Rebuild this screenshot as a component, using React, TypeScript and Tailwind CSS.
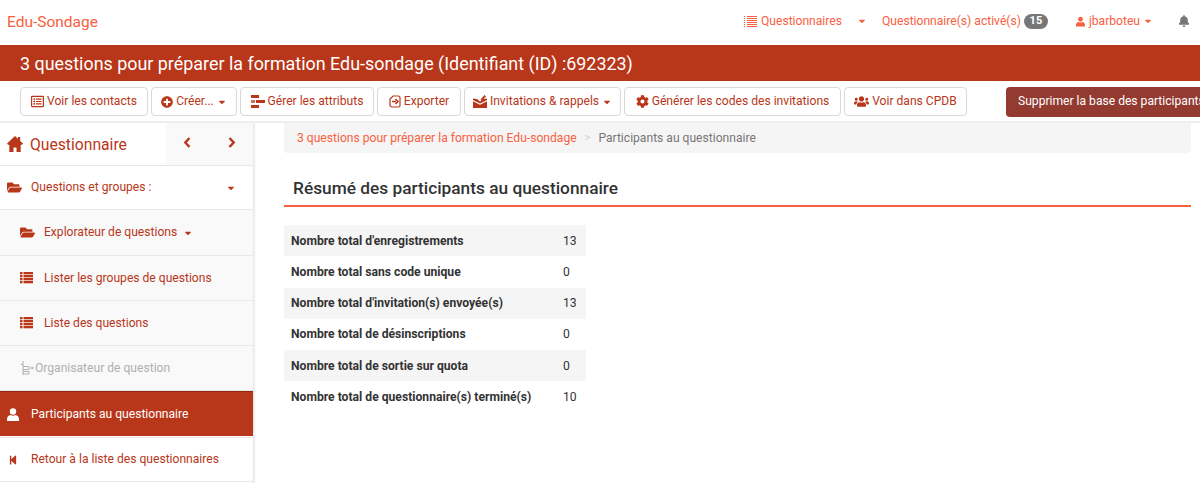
import { FaBell, FaCaretDown, FaCog, FaFolderOpen, FaPlusCircle, FaRegListAlt, FaStepBackward, FaUsers } from "react-icons/fa";

const stats = [
  ["Nombre total d'enregistrements", "13"],
  ["Nombre total sans code unique", "0"],
  ["Nombre total d'invitation(s) envoyée(s)", "13"],
  ["Nombre total de désinscriptions", "0"],
  ["Nombre total de sortie sur quota", "0"],
  ["Nombre total de questionnaire(s) terminé(s)", "10"],
];

// square bullets and thick bars, like the old font awesome list
const ListIcon = ({ className = "" }: { className?: string }) => (
  <svg className={className} width="13" height="12" viewBox="0 0 13 12" fill="currentColor">
    {[0, 3, 6, 9].map((y) => (
      <g key={y}>
        <rect x="0" y={y} width="2.500" height="2.300" />
        <rect x="3.500" y={y} width="9.500" height="2.300" />
      </g>
    ))}
  </svg>
);

const HomeIcon = () => (
  <svg width="16" height="16" viewBox="0 0 16 16" fill="currentColor">
    <path d="M8 0l3 2.800V1h2.200v3.900L16 7.600 15 8.700h-1.300V16H9.500v-4.500h-3V16H2.300V8.700H1L0 7.600z" />
  </svg>
);

const UserIcon = ({ className = "" }: { className?: string }) => (
  <svg className={className} viewBox="0 0 12 13" fill="currentColor">
    <circle cx="6" cy="3.500" r="3.200" />
    <path d="M3.500 7c1.500 1 3.500 1 5 0 2 .2 3.500 2 3.500 4.300V13H0v-1.700C0 9 1.500 7.200 3.500 7z" />
  </svg>
);

const Chevron = ({ right = false }: { right?: boolean }) => (
  <svg width="8" height="11" viewBox="0 0 8 11" fill="none" stroke="currentColor" strokeWidth="2.400">
    <path d={right ? "M1.500 1l4.200 4.500L1.500 10" : "M6.500 1L2.300 5.500 6.500 10"} />
  </svg>
);

const AttributesIcon = () => (
  <svg width="14" height="13" viewBox="0 0 14 13" fill="currentColor">
    <rect x="0" y="0" width="8" height="3" />
    <rect x="0" y="5" width="4" height="3" opacity="0.7" />
    <rect x="5" y="5" width="9" height="3" />
    <rect x="0" y="10" width="8" height="3" />
  </svg>
);

const ExportIcon = () => (
  <svg width="12" height="13" viewBox="0 0 12 13" fill="none" stroke="currentColor" strokeWidth="1.200">
    <path d="M4 1h5a2 2 0 0 1 2 2v7.500a1.500 1.500 0 0 1-1.500 1.500H3a2 2 0 0 1-2-2V4z" />
    <path d="M3 6.500h4M6.500 4l2.500 2.500L6.500 9" strokeWidth="1.500" />
  </svg>
);

const InvitationIcon = () => (
  <svg width="14" height="13" viewBox="0 0 14 13" fill="currentColor">
    <path d="M0 3.500l4 .5 3 2.500 3-2.500 4-.5v1.500L7 8.500 0 5z" />
    <path d="M0 6.300l7 3.500 7-3.500V13H0z" />
    <path d="M7.500 4.500L11.500 0 13 1.500 9 5.500z" />
  </svg>
);

const OrganizerIcon = () => (
  <svg width="13" height="14" viewBox="0 0 13 14" fill="none" stroke="currentColor" strokeWidth="1">
    <path d="M2 0v14M0 3.500h2M2 5.500h6v3H2M2 10.500h6V13H2M9 7h3M11 5.500L12.500 7 11 8.500" />
  </svg>
);

const NavListIcon = () => (
  <svg width="13" height="11" viewBox="0 0 13 11" fill="currentColor">
    {[0, 2, 4, 6, 8, 10].map((y) => (
      <g key={y}>
        <rect x="0" y={y} width="1.200" height="1" />
        <rect x="3" y={y} width="10" height="1" />
      </g>
    ))}
  </svg>
);

const Caret = ({ className = "" }: { className?: string }) => (
  <FaCaretDown className={`text-[10px] ${className}`} />
);

const ToolbarButton = ({ w, children }: { w: string; children: React.ReactNode }) => (
  <div
    className={`${w} h-[29px] shrink-0 flex items-center justify-center gap-[3px] rounded-[4px] border-[1.5px] border-[#d9d9d9] bg-white text-[12.1px] text-[#b83619]`}
  >
    {children}
  </div>
);

const SideRow = ({
  icon,
  children,
  className = "",
}: {
  icon: React.ReactNode;
  children: React.ReactNode;
  className?: string;
}) => (
  <div className={`flex items-center border-b border-[#e7e7e7] text-[12.1px] ${className}`}>
    {icon}
    {children}
  </div>
);

export default function App() {
  return (
    <div className="w-[1200px] h-[483px] overflow-hidden bg-white font-['Roboto',sans-serif]">
      {/* top nav */}
      <nav className="h-[45px] flex items-center pl-[7px] text-[#f9603f]">
        <span className="text-[15.500px] leading-none">Edu-Sondage</span>
        <div className="ml-auto flex items-center text-[12.1px] pb-[2px]">
          <NavListIcon />
          <span className="ml-[4px] w-[81px]">Questionnaires</span>
          <Caret className="ml-[15px]" />
          <span className="ml-[15px]">Questionnaire(s) activé(s)</span>
          <span className="ml-[3px] h-[15px] w-[24px] rounded-full bg-[#777] text-white text-[11px] font-bold flex items-center justify-center">
            15
          </span>
          <UserIcon className="w-[9px] h-[11px] ml-[28px]" />
          <span className="ml-[4px]">jbarboteu</span>
          <Caret className="ml-[3px]" />
          <FaBell className="text-[12px] text-[#777] ml-[25px] mr-[10px]" />
        </div>
      </nav>

      {/* title */}
      <div className="h-[36px] bg-[#b83619] pl-[20px] pt-px flex items-center text-white text-[17.900px] leading-none">
        3 questions pour préparer la formation Edu-sondage (Identifiant (ID) :692323)
      </div>

      {/* toolbar */}
      <div className="h-[42px] pl-[20px] pt-[1px] flex items-center gap-[3px] border-b-2 border-[#eee] overflow-hidden">
        <ToolbarButton w="w-[128px]">
          <FaRegListAlt className="text-[13px]" />
          Voir les contacts
        </ToolbarButton>
        <ToolbarButton w="w-[86px]">
          <FaPlusCircle className="text-[12px]" />
          Créer...
          <Caret />
        </ToolbarButton>
        <ToolbarButton w="w-[134px]">
          <AttributesIcon />
          Gérer les attributs
        </ToolbarButton>
        <ToolbarButton w="w-[84px]">
          <ExportIcon />
          Exporter
        </ToolbarButton>
        <ToolbarButton w="w-[157px]">
          <InvitationIcon />
          Invitations &amp; rappels
          <Caret />
        </ToolbarButton>
        <ToolbarButton w="w-[217px]">
          <FaCog className="text-[13px]" />
          Générer les codes des invitations
        </ToolbarButton>
        <ToolbarButton w="w-[123px]">
          <FaUsers className="text-[15px]" />
          Voir dans CPDB
        </ToolbarButton>
        <div className="ml-[36px] h-[30px] w-[200px] shrink-0 rounded-[4px] bg-[#933a31] text-white text-[12.1px] flex items-center pl-[12px] whitespace-nowrap">
          Supprimer la base des participants
        </div>
      </div>

      <div className="flex h-[360px]">
        {/* sidebar */}
        <aside className="w-[254px] shrink-0 border-r border-[#e7e7e7] shadow-[1px_0_2px_#eee] text-[#b83619]">
          <div className="h-[43px] flex border-b border-[#e7e7e7]">
            <div className="flex-1 flex items-center pl-[7px] text-[15.700px]">
              <HomeIcon />
              <span className="ml-[7px] pt-[2px]">Questionnaire</span>
            </div>
            <div className="w-[87px] bg-[#f9f9f9] flex items-center justify-between px-[17px] pb-[3px]">
              <Chevron />
              <Chevron right />
            </div>
          </div>
          <SideRow className="h-[44px] pl-[7px]" icon={<FaFolderOpen className="text-[15px] mr-[9px]" />}>
            Questions et groupes :
            <Caret className="ml-auto mr-[17px]" />
          </SideRow>
          <div className="bg-[#f9f9f9]">
            <SideRow className="h-[46px] pl-[20px]" icon={<FaFolderOpen className="text-[15px] mr-[9px]" />}>
              Explorateur de questions
              <Caret className="ml-[6px]" />
            </SideRow>
            <SideRow className="h-[45px] pl-[20px]" icon={<ListIcon className="mr-[11px]" />}>
              Lister les groupes de questions
            </SideRow>
            <SideRow className="h-[45px] pl-[20px]" icon={<ListIcon className="mr-[11px]" />}>
              Liste des questions
            </SideRow>
            <SideRow
              className="h-[45px] pl-[21px] text-[#b0b0b0]"
              icon={
                <span className="mr-[1px] text-[#b0b0b0]">
                  <OrganizerIcon />
                </span>
              }
            >
              Organisateur de question
            </SideRow>
          </div>
          <div className="h-[45px] pl-[7px] flex items-center bg-[#b83619] border-t border-[#98260c] text-white text-[12.1px]">
            <UserIcon className="w-[12px] h-[13px] mr-[12px]" />
            Participants au questionnaire
          </div>
          <SideRow className="h-[45px] mt-px pl-[8px] border-t" icon={<FaStepBackward className="text-[10px] mr-[13px]" />}>
            Retour à la liste des questionnaires
          </SideRow>
        </aside>

        {/* content */}
        <main className="w-[907px] ml-[30px] shrink-0">
          <div className="h-[30px] rounded-b-[4px] bg-[#f5f5f5] flex items-center pl-[13px] text-[12.1px]">
            <span className="text-[#f9603f]">3 questions pour préparer la formation Edu-sondage</span>
            <span className="text-[#ccc] text-[11px] mx-[8px]">&gt;</span>
            <span className="text-[#777]">Participants au questionnaire</span>
          </div>
          <h2 className="h-[54px] pt-[24px] pl-[9px] text-[17.300px] leading-[22px] font-medium text-[#333] border-b-2 border-[#f9603f]">
            Résumé des participants au questionnaire
          </h2>
          <div className="mt-[18px] w-[302px]">
            {stats.map(([label, value], i) => (
              <div
                key={label}
                className={`h-[31.300px] flex items-center text-[12.150px] text-[#333] ${i % 2 === 0 ? "bg-[#f5f5f5]" : ""}`}
              >
                <span className="w-[279px] pl-[7px] font-bold">{label}</span>
                <span>{value}</span>
              </div>
            ))}
          </div>
        </main>
      </div>
    </div>
  );
}
